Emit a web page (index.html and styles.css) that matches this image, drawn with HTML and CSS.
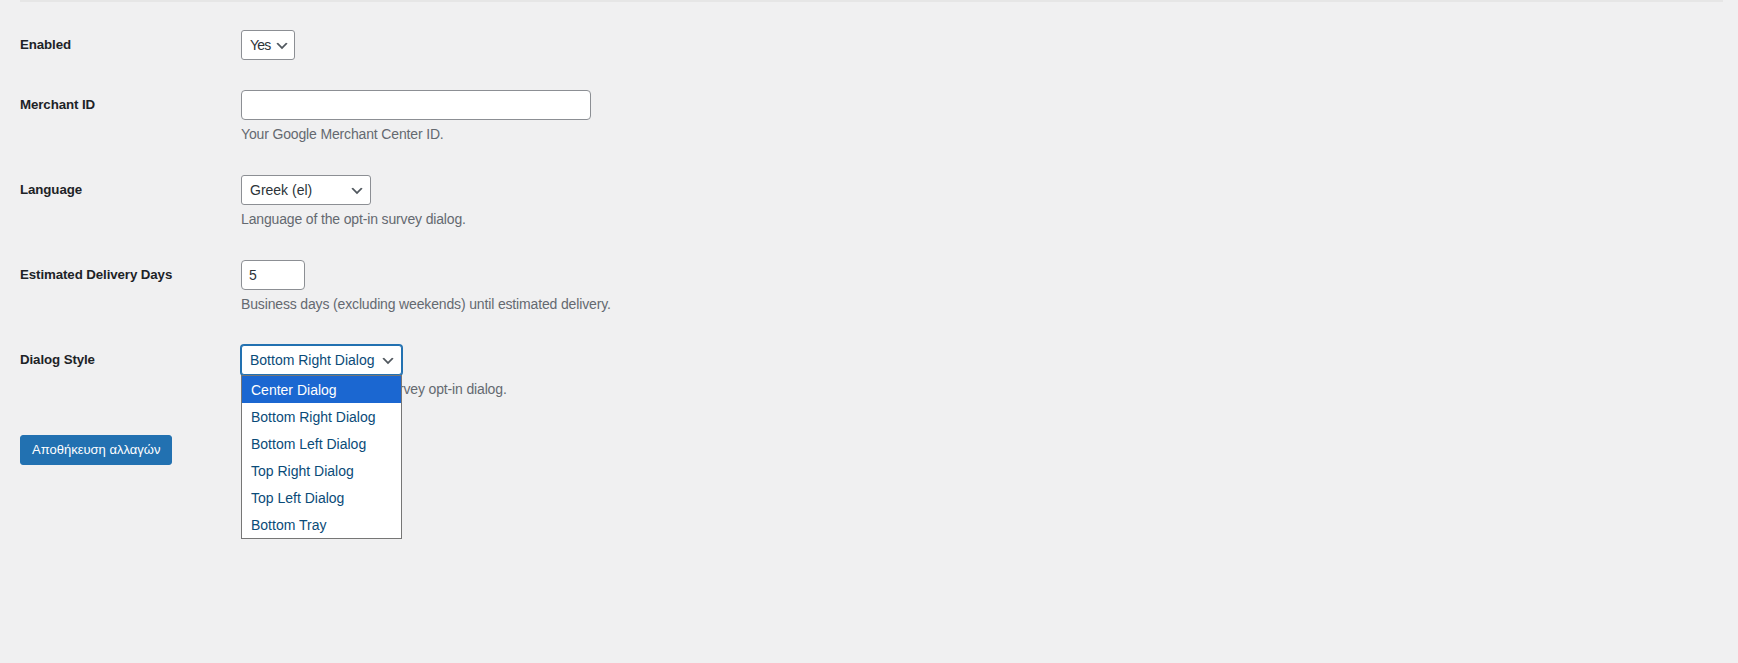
FILE: index.html
```html
<!DOCTYPE html>
<html lang="en">
<head>
<meta charset="utf-8">
<title>Settings</title>
<link rel="stylesheet" href="styles.css">
</head>
<body>
<div class="wrap">
  <form class="settings">
    <div class="form-row">
      <div class="label">Enabled</div>
      <div class="field">
        <div class="select select-yes">
          <span class="select-text">Yes</span>
          <svg class="chev" width="16" height="16" viewBox="0 0 20 20"><path d="M5 6l5 5 5-5 2 1-7 7-7-7 2-1z" fill="#50575e"/></svg>
        </div>
      </div>
    </div>

    <div class="form-row">
      <div class="label">Merchant ID</div>
      <div class="field">
        <div class="input input-regular"></div>
        <p class="description">Your Google Merchant Center ID.</p>
      </div>
    </div>

    <div class="form-row">
      <div class="label">Language</div>
      <div class="field">
        <div class="select select-lang">
          <span class="select-text">Greek (el)</span>
          <svg class="chev" width="16" height="16" viewBox="0 0 20 20"><path d="M5 6l5 5 5-5 2 1-7 7-7-7 2-1z" fill="#50575e"/></svg>
        </div>
        <p class="description">Language of the opt-in survey dialog.</p>
      </div>
    </div>

    <div class="form-row">
      <div class="label">Estimated Delivery Days</div>
      <div class="field">
        <div class="input input-small">5</div>
        <p class="description">Business days (excluding weekends) until estimated delivery.</p>
      </div>
    </div>

    <div class="form-row">
      <div class="label">Dialog Style</div>
      <div class="field">
        <div class="select-wrap">
          <div class="select select-style is-focused">
            <span class="select-text">Bottom Right Dialog</span>
            <svg class="chev" width="16" height="16" viewBox="0 0 20 20"><path d="M5 6l5 5 5-5 2 1-7 7-7-7 2-1z" fill="#50575e"/></svg>
          </div>
          <ul class="dropdown">
            <li class="option is-active">Center Dialog</li>
            <li class="option">Bottom Right Dialog</li>
            <li class="option">Bottom Left Dialog</li>
            <li class="option">Top Right Dialog</li>
            <li class="option">Top Left Dialog</li>
            <li class="option">Bottom Tray</li>
          </ul>
        </div>
        <p class="description">Choose the style of the survey opt-in dialog.</p>
      </div>
    </div>

    <div class="submit">
      <button type="button" class="button-primary">Αποθήκευση αλλαγών</button>
    </div>
  </form>
</div>
</body>
</html>
```

FILE: styles.css
```css
* {
  box-sizing: border-box;
}

html, body {
  margin: 0;
  padding: 0;
}

body {
  background: #f0f0f1;
  color: #3c434a;
  font-family: "Liberation Sans", Arial, sans-serif;
  font-size: 14px;
  min-height: 663px;
}

.wrap {
  margin: 0 15px 0 20px;
  border-top: 2px solid #e6e6e6;
}

.settings {
  padding-top: 13px;
}

.form-row {
  display: grid;
  grid-template-columns: 221px 1fr;
  padding: 15px 0;
}

.label {
  font-size: 13.3px;
  font-weight: bold;
  color: #1d2327;
  line-height: 30px;
  letter-spacing: -0.1px;
}

.field {
  display: flex;
  flex-direction: column;
  align-items: flex-start;
}

.select {
  height: 30px;
  display: flex;
  align-items: center;
  justify-content: space-between;
  padding: 0 5px 0 8px;
  background: #fff;
  border: 1px solid #8c8f94;
  border-radius: 3px;
  color: #2c3338;
  font-size: 14px;
  white-space: nowrap;
}

.select-text {
  line-height: 28px;
}

.chev {
  flex: none;
  margin-top: 2px;
}

.select-yes {
  width: 54px;
  padding-right: 4px;
}

.select-yes .select-text {
  letter-spacing: -0.8px;
}

.select-lang {
  width: 130px;
}

.select-style {
  width: 161px;
  gap: 2px;
}

.select.is-focused {
  border-color: #2271b1;
  box-shadow: 0 0 0 1px #2271b1;
  color: #0a4b78;
}

.input {
  height: 30px;
  background: #fff;
  border: 1px solid #8c8f94;
  border-radius: 4px;
  padding: 0 7px;
  color: #2c3338;
  font-size: 14px;
  line-height: 28px;
}

.input-regular {
  width: 350px;
}

.input-small {
  width: 64px;
}

.description {
  margin: 4px 0 0;
  font-size: 14px;
  line-height: 21px;
  color: #646970;
  letter-spacing: -0.15px;
}

.select-wrap {
  position: relative;
}

.dropdown {
  position: absolute;
  left: 0;
  top: 30px;
  width: 161px;
  margin: 0;
  padding: 0;
  list-style: none;
  background: #fff;
  border: 1px solid #767676;
  z-index: 10;
}

.option {
  height: 27px;
  line-height: 28px;
  padding-left: 9px;
  color: #0a4b78;
  font-size: 14px;
  white-space: nowrap;
}

.option.is-active {
  background: #1b67d1;
  color: #fff;
}

.submit {
  padding-top: 20px;
}

.button-primary {
  height: 30px;
  padding: 0 11px;
  background: #2271b1;
  border: 1px solid #2271b1;
  border-radius: 3px;
  color: #fff;
  font-family: "Liberation Sans", Arial, sans-serif;
  font-size: 13px;
  line-height: 28px;
  cursor: pointer;
}
```
